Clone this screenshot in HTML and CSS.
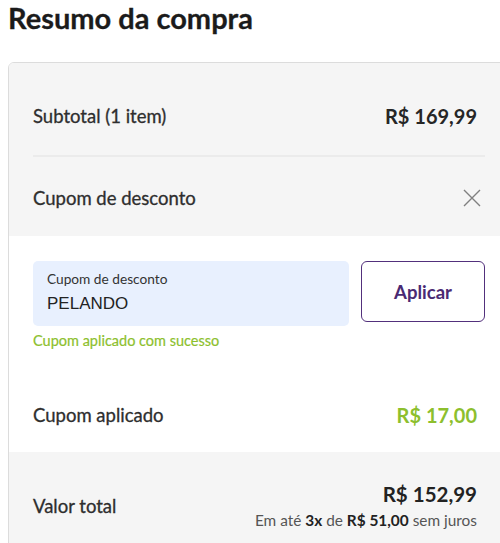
FILE: index.html
```html
<!DOCTYPE html>
<html lang="pt-BR">
<head>
<meta charset="utf-8">
<title>Resumo da compra</title>
<link rel="stylesheet" href="styles.css">
</head>
<body>
<h1 class="title">Resumo da compra</h1>
<div class="card">
  <div class="section grey">
    <div class="row row-subtotal">
      <span class="label">Subtotal (1 item)</span>
      <span class="value">R$ 169,99</span>
    </div>
    <div class="sep"></div>
    <div class="row row-coupon">
      <span class="label">Cupom de desconto</span>
      <svg class="close" width="20" height="20" viewBox="0 0 20 20"><path d="M2 2 L18 18 M18 2 L2 18" stroke="#808080" stroke-width="1.4" fill="none"/></svg>
    </div>
  </div>
  <div class="section white">
    <div class="coupon-form">
      <div class="field">
        <span class="field-label">Cupom de desconto</span>
        <span class="field-value">PELANDO</span>
      </div>
      <button class="apply">Aplicar</button>
    </div>
    <div class="success">Cupom aplicado com sucesso</div>
    <div class="row row-applied">
      <span class="label">Cupom aplicado</span>
      <span class="value green">R$ 17,00</span>
    </div>
  </div>
  <div class="section grey total">
    <span class="label">Valor total</span>
    <div class="total-right">
      <span class="total-value">R$ 152,99</span>
      <span class="installments">Em até <b>3x</b> de <b>R$ 51,00</b> sem juros</span>
    </div>
  </div>
</div>
</body>
</html>
```
FILE: styles.css
```css
html, body {
  margin: 0;
  padding: 0;
  overflow: hidden;
  background: #fff;
}
body {
  font-family: "Lato", "Open Sans", sans-serif;
  color: #333;
  width: 500px;
  height: 543px;
}
.title {
  margin: 0;
  padding: 0 8px;
  font-size: 29px;
  line-height: 36px;
  font-weight: 700;
  color: #1b1b1b;
  height: 62px;
  box-sizing: border-box;
  -webkit-text-stroke: 0.3px #1b1b1b;
}
.card {
  margin-left: 8px;
  width: 510px;
  border: 1px solid #dcdcdc;
  border-radius: 6px;
  overflow: hidden;
}
.section {
  padding: 0 24px;
  width: 452px;
}
.grey { background: #f5f5f5; }
.white { background: #fff; }
.row {
  display: flex;
  justify-content: space-between;
  align-items: center;
  box-sizing: border-box;
}
.label {
  font-size: 18.5px;
  line-height: 24px;
  color: #2e2e2e;
  -webkit-text-stroke: 0.3px #2e2e2e;
}
.value {
  font-size: 20px;
  line-height: 24px;
  font-weight: 700;
  color: #262626;
  padding-right: 8px;
}
.row-subtotal {
  height: 92px;
  padding-top: 13px;
}
.sep {
  height: 2px;
  background: #ebebeb;
}
.row-coupon {
  height: 79px;
  padding-top: 2px;
}
.close { margin-right: 3px; }
.white { padding-top: 25px; }
.coupon-form {
  display: flex;
  align-items: flex-start;
  gap: 12px;
}
.field {
  flex: 1;
  height: 65px;
  background: #e8f0fe;
  border-radius: 5px;
  padding: 10px 14px 0;
  box-sizing: border-box;
  display: flex;
  flex-direction: column;
}
.field-label {
  font-size: 13.7px;
  line-height: 16px;
  color: #333;
}
.field-value {
  font-family: "Liberation Sans", Arial, sans-serif;
  font-size: 17px;
  line-height: 24px;
  color: #222;
  margin-top: 5px;
}
.apply {
  width: 124px;
  height: 61px;
  background: #fff;
  border: 1.5px solid #52307c;
  border-radius: 6px;
  font-family: "Lato", "Open Sans", sans-serif;
  font-size: 18.5px;
  font-weight: 700;
  color: #4a2a73;
  cursor: pointer;
  padding: 0;
}
.success {
  margin-top: 7px;
  font-size: 14.5px;
  line-height: 16px;
  color: #8dbf2e;
  -webkit-text-stroke: 0.2px #8dbf2e;
}
.row-applied {
  height: 103px;
  align-items: flex-start;
  padding-top: 54px;
}
.green { color: #8dbf2e; }
.total {
  display: flex;
  justify-content: space-between;
  align-items: center;
  padding-top: 29px;
  padding-bottom: 29px;
}
.total-right {
  display: flex;
  flex-direction: column;
  align-items: flex-end;
  padding-right: 8px;
}
.total-value {
  font-size: 20.5px;
  font-weight: 700;
  color: #222;
  line-height: 26px;
}
.installments {
  margin-top: 3px;
  font-size: 15.4px;
  line-height: 20px;
  color: #555;
}
.installments b { color: #222; }
```
